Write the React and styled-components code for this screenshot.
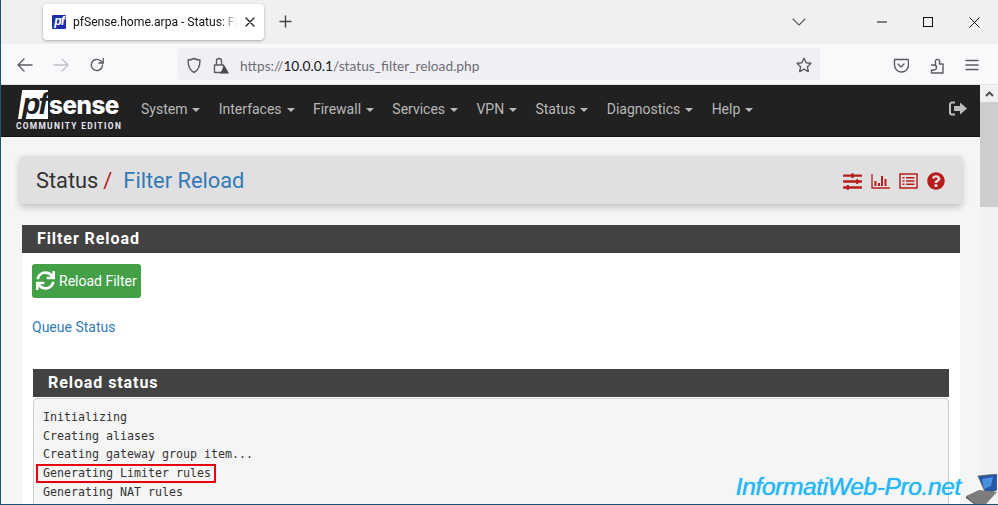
import React from 'react';
import styled, { createGlobalStyle } from 'styled-components';
import { FaSlidersH, FaQuestionCircle, FaSync } from 'react-icons/fa';

const GlobalStyle = createGlobalStyle`
  html, body { margin: 0; padding: 0; background: #f5f5f5; overflow: hidden; }
  * { box-sizing: border-box; }
`;

const Frame = styled.div`
  position: relative;
  width: 998px;
  height: 505px;
  overflow: hidden;
  display: flex;
  flex-direction: column;
  border-left: 1px solid #1b5472;
  border-bottom: 1px solid #1b5472;
  font-family: Roboto, "Liberation Sans", sans-serif;
`;

/* browser chrome */
const TabStrip = styled.div`
  flex: none;
  height: 44px;
  background: #f0f0f0;
  display: flex;
  align-items: flex-start;
  padding: 4px 0 0 42px;
`;

const Tab = styled.div`
  width: 221px;
  height: 36px;
  background: #fff;
  border-radius: 4px;
  box-shadow: 0 1px 3px rgba(0, 0, 0, 0.3);
  display: flex;
  align-items: center;
  padding: 0 9px;
  gap: 7px;
`;

const Favicon = styled.div`
  flex: none;
  width: 14px;
  height: 14px;
  background: #1f2fa8;
  color: #fff;
  font: italic 700 12px/13px "Liberation Sans", sans-serif;
  text-align: center;
  letter-spacing: -1px;
  border-radius: 1px;
`;

const TabTitle = styled.div`
  flex: 1;
  min-width: 0;
  white-space: nowrap;
  font: 400 12.2px Roboto, sans-serif;
  letter-spacing: -0.04px;
  color: #15141a;
  -webkit-mask-image: linear-gradient(to right, #000 88%, transparent 100%);
  mask-image: linear-gradient(to right, #000 88%, transparent 100%);
`;

const StripIcon = styled.svg`
  flex: none;
  display: block;
  margin: ${p => p.$margin || '0'};
`;

const Toolbar = styled.div`
  flex: none;
  height: 41px;
  background: #f9f9fb;
  display: flex;
  align-items: center;
  padding: 2px 0 0 15px;
  border-bottom: 1px solid #e4e4e7;
`;

const UrlBar = styled.div`
  width: 642px;
  height: 32px;
  margin: -2px 0 0 73px;
  background: #f0f0f4;
  border-radius: 4px;
  display: flex;
  align-items: center;
  padding: 2px 8px 0;
`;

const UrlText = styled.div`
  flex: 1;
  margin-left: 11px;
  font: 400 13.74px Lato, sans-serif;
  color: #6d6d75;
  white-space: nowrap;
  strong { font-weight: 400; color: #15141a; }
`;

/* pfSense page */
const Viewport = styled.div`
  flex: 1;
  min-height: 0;
  display: flex;
`;

const Page = styled.div`
  flex: 1;
  min-width: 0;
  background: #f5f5f5;
  overflow: hidden;
`;

const ScrollTrack = styled.div`
  flex: none;
  width: 18px;
  background: #f1f1f1;
`;

const ScrollArrow = styled.div`
  height: 17px;
  display: flex;
  align-items: center;
  justify-content: center;
`;

const ScrollThumb = styled.div`
  height: 105px;
  background: #cdcdcd;
`;

const Navbar = styled.div`
  height: 52px;
  background: #212121;
  border-bottom: 1px solid #111;
  display: flex;
  align-items: center;
  padding-left: 15px;
`;

const Logo = styled.div`
  flex: none;
  width: 106px;
  margin-right: 19px;
  display: flex;
  flex-direction: column;
  align-items: flex-start;
`;

const LogoTop = styled.div`
  display: flex;
  align-items: flex-end;
  height: 29px;
`;

const LogoPf = styled.span`
  flex: none;
  width: 30px;
  height: 29px;
  background: #fff;
  color: #212121;
  clip-path: polygon(14% 0, 100% 0, 100% 100%, 0 100%);
  font: italic 700 30px/27px "Liberation Sans", sans-serif;
  letter-spacing: -2px;
  padding-left: 4px;
  margin-left: 2px;
`;

const LogoSense = styled.span`
  color: #fff;
  font: 800 24.2px/27px Inter, "Liberation Sans", sans-serif;
  letter-spacing: -0.45px;
  margin-left: 1px;
`;

const LogoEdition = styled.div`
  margin-top: 2px;
  color: #e8e8f0;
  font: 700 8.4px/10px Roboto, sans-serif;
  letter-spacing: 1.3px;
  white-space: nowrap;
`;

const NavItem = styled.div`
  display: flex;
  align-items: center;
  color: #b8b8b8;
  font-size: 14px;
  margin: 0 18.3px 4px 0;
  white-space: nowrap;
  &::after {
    content: '';
    margin-left: 5px;
    margin-top: 2px;
    border-top: 4px solid #b8b8b8;
    border-left: 4px solid transparent;
    border-right: 4px solid transparent;
  }
`;

const LogoutWrap = styled.div`
  margin: 0 13px 4px auto;
  display: flex;
`;

const Content = styled.div`
  padding: 19px 18px 0 19px;
`;

const PageHeader = styled.div`
  height: 48px;
  background: #e0e0e0;
  border-radius: 3px;
  box-shadow: 0 3px 7px rgba(0, 0, 0, 0.22);
  display: flex;
  align-items: center;
  padding: 0 16px;
  font-size: 21.8px;
  color: #333;
`;

const Crumb = styled.span`
  color: ${p => p.$link ? '#337ab7' : '#333'};
  margin-left: ${p => p.$link ? '11px' : '0'};
`;

const Slash = styled.span`
  color: #b71c1c;
  margin-left: 5px;
`;

const HeaderIcons = styled.div`
  margin: 2px 1px 0 auto;
  display: flex;
  align-items: center;
  gap: 9px;
  color: #b71c1c;
`;

const Panel = styled.div`
  margin: ${p => p.$nested ? '0 1px 0 1px' : '21px 2px 0 2px'};
  background: #fff;
`;

const PanelHeading = styled.div`
  height: 28px;
  background: #424242;
  color: #fff;
  font-size: 16px;
  font-weight: 700;
  letter-spacing: 0.92px;
  line-height: 28px;
  padding-left: 15px;
`;

const PanelBody = styled.div`
  padding: 11px 10px 0 10px;
`;

const ReloadButton = styled.button`
  display: flex;
  align-items: center;
  gap: 4px;
  width: 109px;
  height: 34px;
  padding: 0 0 1px 4px;
  border: 0;
  border-radius: 3px;
  background: #43a047;
  color: #fff;
  font: 400 14px Roboto, sans-serif;
  white-space: nowrap;
`;

const QueueLink = styled.a`
  display: block;
  margin: 21px 0 33px;
  color: #337ab7;
  font-size: 14px;
  line-height: 17px;
`;

const Console = styled.pre`
  margin: 1px 0 0;
  height: 140px;
  padding: 9px 9px;
  background: #f5f5f5;
  border: 1px solid #ccc;
  border-radius: 4px;
  color: #333;
  font: 400 11.63px/18.7px "DejaVu Sans Mono", monospace;
`;

const Highlight = styled.span`
  position: absolute;
  left: 35px;
  top: 464px;
  width: 180px;
  height: 19px;
  border: 2px solid #e8000d;
`;

const Watermark = styled.div`
  position: absolute;
  right: 1px;
  bottom: 0;
  display: flex;
  align-items: flex-end;
  gap: 5px;
`;

const WatermarkText = styled.span`
  margin-bottom: 2px;
  font: italic 400 24.7px/30px "Liberation Sans", sans-serif;
  letter-spacing: -0.45px;
  color: #29b6f6;
  text-shadow: 0 0 1px #29b6f6, 0 0 2px rgba(255, 255, 255, 0.9);
`;

const navItems = ['System', 'Interfaces', 'Firewall', 'Services', 'VPN', 'Status', 'Diagnostics', 'Help'];

const logLines = [
  'Initializing',
  'Creating aliases',
  'Creating gateway group item...',
  'Generating Limiter rules',
  'Generating NAT rules',
];

const line = { fill: 'none', stroke: '#5b5b66', strokeWidth: 1.4, strokeLinecap: 'round', strokeLinejoin: 'round' };

function Back({ color = '#5b5b66', flip, margin }) {
  return (
    <StripIcon $margin={margin} width="18" height="16" viewBox="0 0 18 16" style={flip ? { transform: 'scaleX(-1)' } : undefined}>
      <path d="M2 8h14M8 2L2 8l6 6" {...line} stroke={color} />
    </StripIcon>
  );
}

export default function App() {
  return (
    <Frame>
      <GlobalStyle />
      <TabStrip>
        <Tab>
          <Favicon>pf</Favicon>
          <TabTitle>pfSense.home.arpa - Status: Filt</TabTitle>
          <StripIcon width="10" height="10" viewBox="0 0 10 10">
            <path d="M1 1l8 8M9 1L1 9" {...line} stroke="#222" />
          </StripIcon>
        </Tab>
        <StripIcon $margin="11px 0 0 15px" width="13" height="13" viewBox="0 0 13 13">
          <path d="M6.5 1v11M1 6.5h11" {...line} stroke="#444" />
        </StripIcon>
        <StripIcon $margin="14px 0 0 500px" width="14" height="8" viewBox="0 0 14 8">
          <path d="M1 1l6 6 6-6" {...line} strokeWidth="1.1" />
        </StripIcon>
        <StripIcon $margin="17px 0 0 71px" width="10" height="2" viewBox="0 0 10 2">
          <path d="M0 1h10" stroke="#111" strokeWidth="1" fill="none" />
        </StripIcon>
        <StripIcon $margin="13px 0 0 36px" width="10" height="10" viewBox="0 0 10 10">
          <rect x="0.5" y="0.5" width="9" height="9" fill="none" stroke="#111" />
        </StripIcon>
        <StripIcon $margin="13px 0 0 36px" width="11" height="11" viewBox="0 0 11 11">
          <path d="M0.5 0.5l10 10M10.5 0.5l-10 10" stroke="#111" fill="none" />
        </StripIcon>
      </TabStrip>
      <Toolbar>
        <Back />
        <Back color="#c2c2c8" flip margin="0 0 0 18px" />
        <StripIcon $margin="0 0 0 19px" width="16" height="16" viewBox="0 0 16 16">
          <path d="M13.5 8A5.6 5.6 0 1 1 11.6 3.8L14 6" {...line} />
          <path d="M14.2 1.6V6H9.8" {...line} />
        </StripIcon>
        <UrlBar>
          <StripIcon width="16" height="17" viewBox="0 0 16 17">
            <path d="M8 1.5c2 1 4 1.5 6 1.5 0 6-1 10-6 12.5C3 13 2 9 2 3c2 0 4-.5 6-1.5z" {...line} />
          </StripIcon>
          <StripIcon $margin="0 0 0 11px" width="16" height="17" viewBox="0 0 16 17">
            <path d="M1.500 8h9v7.500h-9zM3.500 8V4a2.500 2.500 0 0 1 5 0V8" {...line} />
            <path d="M11.500 8.500l4.500 8h-9z" fill="#4a4a52" />
          </StripIcon>
          <UrlText>https://<strong>10.0.0.1</strong>/status_filter_reload.php</UrlText>
          <StripIcon width="16" height="16" viewBox="0 0 16 16">
            <path d="M8 1.2l2.1 4.5 4.9.6-3.6 3.4.9 4.9L8 12.2l-4.3 2.4.9-4.9L1 6.3l4.9-.6z" {...line} />
          </StripIcon>
        </UrlBar>
        <StripIcon $margin="0 0 0 73px" width="16" height="15" viewBox="0 0 16 15">
          <path d="M1.5 1.5h13a1 1 0 0 1 1 1V7a7 7 0 0 1-14 0V2.500a1 1 0 0 1 .5-1z" {...line} />
          <path d="M5 6l3 3 3-3" {...line} />
        </StripIcon>
        <StripIcon $margin="0 0 0 20px" width="16" height="17" viewBox="0 0 16 17">
          <path d="M2.500 8h4V5.500a2.200 2.200 0 1 1 4 0V7h3.500v9H2.500v-3h2.500a2.500 2.500 0 0 0 0-5z" {...line} />
        </StripIcon>
        <StripIcon $margin="0 0 0 20px" width="14" height="12" viewBox="0 0 14 12">
          <path d="M1 1.500h12M1 6h12M1 10.500h12" {...line} />
        </StripIcon>
      </Toolbar>
      <Viewport>
        <Page>
          <Navbar>
            <Logo>
              <LogoTop>
                <LogoPf>pf</LogoPf>
                <LogoSense>sense</LogoSense>
              </LogoTop>
              <LogoEdition>COMMUNITY EDITION</LogoEdition>
            </Logo>
            {navItems.map(item => <NavItem key={item}>{item}</NavItem>)}
            <LogoutWrap>
              <svg width="18" height="15" viewBox="0 0 18 15">
                <path d="M6 1.500H3a2 2 0 0 0-2 2v8a2 2 0 0 0 2 2h3" fill="none" stroke="#bdbdbd" strokeWidth="2" />
                <path d="M5 5h6V1.500L18 7.500l-7 6V10H5z" fill="#bdbdbd" />
              </svg>
            </LogoutWrap>
          </Navbar>
          <Content>
            <PageHeader>
              <Crumb>Status</Crumb>
              <Slash>/</Slash>
              <Crumb $link>Filter Reload</Crumb>
              <HeaderIcons>
                <FaSlidersH size={19} />
                <svg width="19" height="16" viewBox="0 0 19 16">
                  <path d="M1 1v14h18" fill="none" stroke="currentColor" strokeWidth="1.300" />
                  <path d="M4.500 8v5M8 10v3M11 3v10M14.500 6v7" fill="none" stroke="currentColor" strokeWidth="2" />
                </svg>
                <svg width="19" height="16" viewBox="0 0 19 16">
                  <rect x="1" y="1" width="17" height="14" fill="none" stroke="currentColor" strokeWidth="1.500" />
                  <path d="M3.500 4.700h2M3.500 8h2M3.500 11.300h2M7 4.700h8.500M7 8h8.500M7 11.300h8.500" fill="none" stroke="currentColor" strokeWidth="1.600" />
                </svg>
                <FaQuestionCircle size={18} />
              </HeaderIcons>
            </PageHeader>
            <Panel>
              <PanelHeading>Filter Reload</PanelHeading>
              <PanelBody>
                <ReloadButton>
                  <FaSync size={19} />
                  Reload Filter
                </ReloadButton>
                <QueueLink>Queue Status</QueueLink>
                <Panel $nested>
                  <PanelHeading>Reload status</PanelHeading>
                  <Console>{logLines.join('\n')}</Console>
                </Panel>
              </PanelBody>
            </Panel>
          </Content>
        </Page>
        <ScrollTrack>
          <ScrollArrow>
            <svg width="9" height="6" viewBox="0 0 9 6">
              <path d="M1 5l3.500-3.500L8 5" fill="none" stroke="#505050" strokeWidth="2" />
            </svg>
          </ScrollArrow>
          <ScrollThumb />
        </ScrollTrack>
      </Viewport>
      <Highlight />
      <Watermark>
        <WatermarkText>InformatiWeb-Pro.net</WatermarkText>
        <svg width="31" height="30" viewBox="0 0 31 30">
          <path d="M12 2L31 0v16l-11 4z" fill="#2458a6" stroke="#666" strokeWidth="0.8" />
          <path d="M16 5l11-2-2 9-7 3z" fill="#4a8fe0" />
          <path d="M0 22l13-6 18 2-11 12H10z" fill="#7c7c7c" />
          <path d="M0 22l10 8h-2l-8-6z" fill="#4f4f4f" />
        </svg>
      </Watermark>
    </Frame>
  );
}
